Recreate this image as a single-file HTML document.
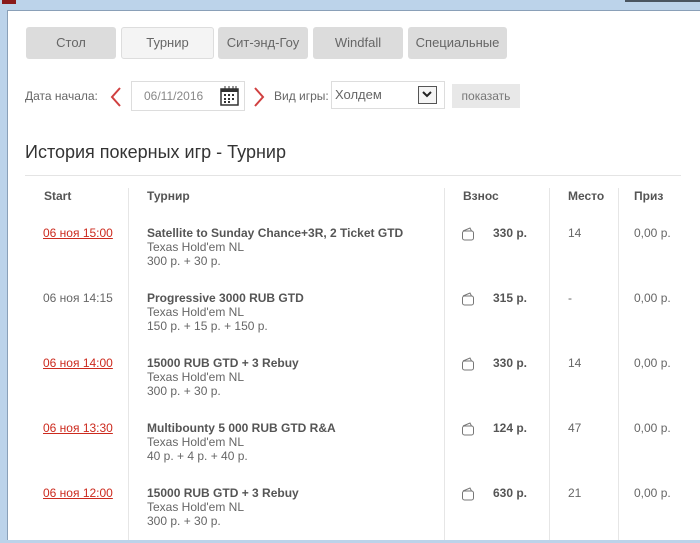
<!DOCTYPE html>
<html><head><meta charset="utf-8"><style>
body{margin:0;width:700px;height:543px;overflow:hidden;background:#bcd3ea;font-family:"Liberation Sans",sans-serif;}
#win{position:absolute;left:7px;top:10px;width:700px;height:530px;background:#fff;border-top:1px solid #8aa0b8;border-left:1px solid #8aa0b8;}
.a{position:absolute;white-space:nowrap;}
.tab{position:absolute;top:27px;height:32px;background:#dcdcdc;border-radius:3px;font-size:13px;color:#666;text-align:center;line-height:32px;}
.tab.on{background:#f4f4f4;border:1px solid #ddd;height:30px;line-height:30px;}
.t{font-size:12px;color:#666;}
.b{font-size:12px;color:#555;font-weight:bold;}
.r{font-size:12px;color:#cc2a1e;text-decoration:underline;}
.vl{position:absolute;width:1px;background:#e6e6e6;top:188px;height:352px;}
</style></head><body>
<div class="a" style="left:0;top:0;width:700px;height:10px;background:#bcd3ea"></div>
<div class="a" style="left:2px;top:0;width:14px;height:4px;background:#8a1a1a"></div>
<div class="a" style="left:625px;top:0;width:75px;height:2px;background:#4a5560"></div>
<div id="win"></div>
<div class="tab" style="left:26px;width:90px">Стол</div>
<div class="tab on" style="left:121px;width:91px">Турнир</div>
<div class="tab" style="left:218px;width:90px">Сит-энд-Гоу</div>
<div class="tab" style="left:313px;width:90px">Windfall</div>
<div class="tab" style="left:408px;width:99px">Специальные</div>

<div class="a t" style="left:25px;top:89px">Дата начала:</div>
<svg class="a" style="left:109px;top:86px" width="14" height="22"><path d="M11 2 L3 11 L11 20" stroke="#d04040" stroke-width="2" fill="none"/></svg>
<div class="a" style="left:131px;top:81px;width:112px;height:28px;border:1px solid #ddd;"></div>
<div class="a t" style="left:144px;top:89px;color:#888">06/11/2016</div>
<svg class="a" style="left:219px;top:85px" width="22" height="22"><rect x="2" y="4" width="17" height="16" fill="none" stroke="#333" stroke-width="1.5"/><rect x="2" y="4" width="17" height="3" fill="#333"/><path d="M6 1v5M10 1v5M14 1v5M17 1v5" stroke="#333"/><g fill="#333"><rect x="5" y="9" width="2" height="2"/><rect x="9" y="9" width="2" height="2"/><rect x="13" y="9" width="2" height="2"/><rect x="5" y="13" width="2" height="2"/><rect x="9" y="13" width="2" height="2"/><rect x="13" y="13" width="2" height="2"/><rect x="5" y="16" width="2" height="2"/><rect x="9" y="16" width="2" height="2"/></g></svg>
<svg class="a" style="left:252px;top:86px" width="14" height="22"><path d="M3 2 L11 11 L3 20" stroke="#d04040" stroke-width="2" fill="none"/></svg>
<div class="a t" style="left:274px;top:89px">Вид игры:</div>
<div class="a" style="left:331px;top:81px;width:112px;height:26px;border:1px solid #ddd;"></div>
<div class="a t" style="left:335px;top:87px;color:#666;font-size:13px">Холдем</div>
<div class="a" style="left:418px;top:86px;width:17px;height:16px;border:1px solid #555;background:#f4f4f4"></div>
<svg class="a" style="left:421px;top:89px" width="12" height="10"><path d="M2 3 L6 7 L10 3" stroke="#222" stroke-width="2" fill="none"/></svg>
<div class="a" style="left:452px;top:84px;width:68px;height:24px;background:#e8e8e8;font-size:12px;color:#777;text-align:center;line-height:24px">показать</div>

<div class="a" style="left:25px;top:142px;font-size:18px;color:#333">История покерных игр - Турнир</div>
<div class="a" style="left:25px;top:175px;width:656px;height:1px;background:#e4e4e4"></div>

<div class="vl" style="left:128px"></div>
<div class="vl" style="left:444px"></div>
<div class="vl" style="left:549px"></div>
<div class="vl" style="left:618px"></div>

<div class="a b" style="left:44px;top:189px">Start</div>
<div class="a b" style="left:147px;top:189px">Турнир</div>
<div class="a b" style="left:463px;top:189px">Взнос</div>
<div class="a b" style="left:568px;top:189px">Место</div>
<div class="a b" style="left:634px;top:189px">Приз</div>

<div id="rows"></div>
<script>
var R=[["06 ноя 15:00",1,"Satellite to Sunday Chance+3R, 2 Ticket GTD","300 р. + 30 р.","330 р.","14"],
["06 ноя 14:15",0,"Progressive 3000 RUB GTD","150 р. + 15 р. + 150 р.","315 р.","-"],
["06 ноя 14:00",1,"15000 RUB GTD + 3 Rebuy","300 р. + 30 р.","330 р.","14"],
["06 ноя 13:30",1,"Multibounty 5 000 RUB GTD R&amp;A","40 р. + 4 р. + 40 р.","124 р.","47"],
["06 ноя 12:00",1,"15000 RUB GTD + 3 Rebuy","300 р. + 30 р.","630 р.","21"]];
var h="";R.forEach(function(r,i){var y=226+i*65;
h+='<div class="a '+(r[1]?'r':'t')+'" style="left:43px;top:'+y+'px">'+r[0]+'</div>';
h+='<div class="a b" style="left:147px;top:'+y+'px">'+r[2]+'</div>';
h+='<div class="a t" style="left:147px;top:'+(y+14)+'px">Texas Hold\'em NL</div>';
h+='<div class="a t" style="left:147px;top:'+(y+28)+'px">'+r[3]+'</div>';
h+='<svg class="a" style="left:460px;top:'+(y)+'px" width="16" height="16"><path d="M3 5 L10 2 L11.5 5" fill="none" stroke="#777"/><rect x="2.5" y="5" width="11" height="9" rx="2" fill="none" stroke="#777"/></svg>';
h+='<div class="a b" style="left:493px;top:'+y+'px">'+r[4]+'</div>';
h+='<div class="a t" style="left:568px;top:'+y+'px">'+r[5]+'</div>';
h+='<div class="a t" style="left:634px;top:'+y+'px">0,00 р.</div>';});
document.getElementById("rows").innerHTML=h;
</script>
<div class="a" style="left:0;top:540px;width:700px;height:3px;background:#bcd3ea"></div>
</body></html>
